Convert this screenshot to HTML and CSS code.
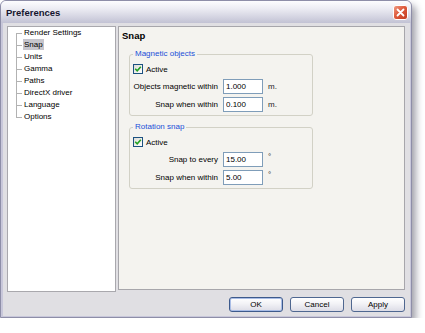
FILE: index.html
```html
<!DOCTYPE html>
<html>
<head>
    <meta charset="utf-8" />
    <link rel="stylesheet" href="styles.css">
    <title>Preferences</title>
</head>

<body>
    <div class="window">
        <div class="titlebar">
            <span class="title">Preferences</span>
            <span class="close">
                <svg width="15" height="15" viewBox="0 0 15 15">
                    <defs>
                        <linearGradient id="red" x1="0" y1="0" x2="1" y2="1">
                            <stop offset="0" stop-color="#f0a088" />
                            <stop offset="0.45" stop-color="#de5a3c" />
                            <stop offset="1" stop-color="#c03a20" />
                        </linearGradient>
                    </defs>
                    <rect x="0.5" y="0.5" width="14" height="14" rx="2.5" fill="url(#red)" stroke="#ffffff" />
                    <path d="M4.5 4.5 L10.5 10.5 M10.5 4.5 L4.5 10.5" stroke="#ffffff" stroke-width="1.8" stroke-linecap="round" />
                </svg>
            </span>
        </div>

        <div class="client">
            <div class="main">
                <ul class="tree">
                    <li><span>Render Settings</span></li>
                    <li class="selected"><span>Snap</span></li>
                    <li><span>Units</span></li>
                    <li><span>Gamma</span></li>
                    <li><span>Paths</span></li>
                    <li><span>DirectX driver</span></li>
                    <li><span>Language</span></li>
                    <li><span>Options</span></li>
                </ul>

                <div class="page">
                    <h2>Snap</h2>

                    <fieldset class="group">
                        <legend>Magnetic objects</legend>
                        <div class="check-row">
                            <span class="check">
                                <svg width="8" height="8" viewBox="0 0 8 8"><path d="M1.2 3.8 L3.2 5.8 L6.8 1.8" fill="none" stroke="#21a121" stroke-width="1.6" /></svg>
                            </span>
                            Active
                        </div>
                        <div class="fields">
                            <label for="mag">Objects magnetic within</label>
                            <input type="text" id="mag" value="1.000" />
                            <span class="unit">m.</span>
                            <label for="snapw">Snap when within</label>
                            <input type="text" id="snapw" value="0.100" />
                            <span class="unit">m.</span>
                        </div>
                    </fieldset>

                    <fieldset class="group group-second">
                        <legend>Rotation snap</legend>
                        <div class="check-row">
                            <span class="check">
                                <svg width="8" height="8" viewBox="0 0 8 8"><path d="M1.2 3.8 L3.2 5.8 L6.8 1.8" fill="none" stroke="#21a121" stroke-width="1.6" /></svg>
                            </span>
                            Active
                        </div>
                        <div class="fields">
                            <label for="every">Snap to every</label>
                            <input type="text" id="every" value="15.00" />
                            <span class="unit deg">°</span>
                            <label for="rotw">Snap when within</label>
                            <input type="text" id="rotw" value="5.00" />
                            <span class="unit deg">°</span>
                        </div>
                    </fieldset>
                </div>
            </div>

            <div class="buttons">
                <button type="button" class="button default">OK</button>
                <button type="button" class="button">Cancel</button>
                <button type="button" class="button">Apply</button>
            </div>
        </div>
    </div>
</body>
</html>
```

FILE: styles.css
```css
body {
    margin: 0;
    background: #ffffff;
    font-family: "Liberation Sans", Arial, sans-serif;
    font-size: 8px;
    color: #000000;
}

.window {
    width: 412px;
    height: 318px;
    box-sizing: border-box;
    display: flex;
    flex-direction: column;
    border: 1px solid #8e8ea8;
    border-radius: 6px 6px 0 0;
    background: #c8c7da;
    box-shadow: 4px 5px 7px rgba(50, 50, 70, 0.45);
}

.titlebar {
    flex: none;
    height: 22px;
    display: flex;
    align-items: center;
    justify-content: space-between;
    padding: 0 3px 0 5px;
    border-radius: 5px 5px 0 0;
    background: linear-gradient(#fdfdff, #ececf3 35%, #d6d6e3 70%, #c2c2d4);
}

.title {
    font-size: 9.5px;
    font-weight: bold;
    color: #15152e;
}

.close {
    display: flex;
    width: 15px;
    height: 15px;
}

.client {
    flex: 1;
    min-height: 0;
    display: flex;
    flex-direction: column;
    margin: 0 1px 1px 2px;
    padding: 3px 5px 4px 4px;
    background: #e0dfe3;
}

.main {
    flex: 1;
    min-height: 0;
    display: flex;
    gap: 2px;
}

/* tree on the left */
.tree {
    width: 109px;
    box-sizing: border-box;
    margin: 0;
    padding: 0;
    list-style: none;
    border: 1px solid #a9a8ad;
    background: #ffffff;
}

.tree li {
    position: relative;
    height: 12px;
    line-height: 12px;
    padding-left: 15px;
}

.tree li span {
    padding: 1px 1px;
}

.tree li::before {
    content: "";
    position: absolute;
    left: 8px;
    top: 6px;
    width: 6px;
    border-top: 1px solid #b2b2b2;
}

.tree li::after {
    content: "";
    position: absolute;
    left: 8px;
    top: 6px;
    height: 12px;
    border-left: 1px solid #b2b2b2;
}

.tree li:last-child::after {
    display: none;
}

.tree .selected span {
    background: #c6c5cc;
}

/* settings page */
.page {
    flex: 1;
    margin-bottom: 2px;
    padding: 3px;
    border: 1px solid #a7a6ab;
    background: #f4f3ef;
}

.page h2 {
    margin: 0;
    font-size: 9.5px;
    line-height: 12px;
    font-weight: bold;
}

.group {
    width: 184px;
    box-sizing: border-box;
    margin: 7px 0 0 7px;
    padding: 4px 3px 3px 3px;
    border: 1px solid #d2d1c6;
    border-radius: 3px;
}

.group-second {
    margin-top: 6px;
}

.group legend {
    padding: 0 2px;
    line-height: 10px;
    color: #1a4fd8;
}

.check-row {
    display: flex;
    align-items: center;
    gap: 3px;
    height: 12px;
}

.check {
    width: 10px;
    height: 10px;
    box-sizing: border-box;
    display: flex;
    align-items: center;
    justify-content: center;
    border: 1px solid #1c5180;
    background: linear-gradient(135deg, #dcdcd6, #ffffff);
}

.fields {
    display: grid;
    grid-template-columns: 85px 40px auto;
    column-gap: 5px;
    row-gap: 3px;
    align-items: center;
    margin-top: 4px;
}

.fields label {
    text-align: right;
    white-space: nowrap;
}

.fields input {
    width: 40px;
    height: 15px;
    box-sizing: border-box;
    margin: 0;
    padding: 0 2px;
    border: 1px solid #7f9db9;
    background: #ffffff;
    font-family: inherit;
    font-size: 8px;
    color: #000000;
}

.unit {
    color: #222222;
}

.deg {
    align-self: start;
    line-height: 10px;
}

/* bottom buttons */
.buttons {
    flex: none;
    display: flex;
    justify-content: flex-end;
    gap: 7px;
    margin-top: 5px;
}

.button {
    width: 54px;
    height: 15px;
    padding: 0;
    border: 1px solid #4f6790;
    border-radius: 3px;
    background: linear-gradient(#ffffff, #f2f2f6 45%, #dcdce6);
    font-family: inherit;
    font-size: 8px;
    color: #000000;
}

.default {
    border-color: #3d5a8c;
    box-shadow: inset 0 0 0 1px #a9bde6;
}
```
